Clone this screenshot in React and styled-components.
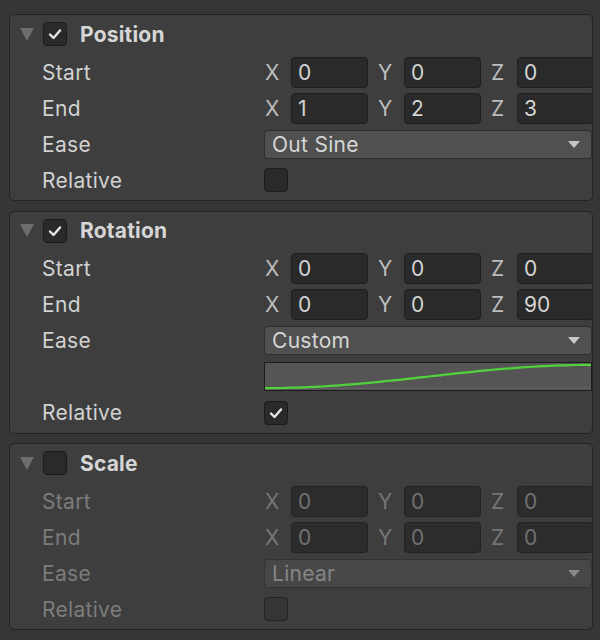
import styled, { createGlobalStyle } from 'styled-components';

const GlobalStyle = createGlobalStyle`
body {
  margin: 0;
  background: #363636;
  font-family: Inter, "Noto Sans", "Liberation Sans", sans-serif;
}
`

const sections = [
    {
        title: 'Position',
        enabled: true,
        start: ['0', '0', '0'],
        end: ['1', '2', '3'],
        ease: 'Out Sine',
        relative: false,
    },
    {
        title: 'Rotation',
        enabled: true,
        start: ['0', '0', '0'],
        end: ['0', '0', '90'],
        ease: 'Custom',
        curve: true,
        relative: true,
    },
    {
        title: 'Scale',
        enabled: false,
        start: ['0', '0', '0'],
        end: ['0', '0', '0'],
        ease: 'Linear',
        relative: false,
    },
];

function CheckMark() {
    return (
        <svg width="16" height="16" viewBox="0 0 16 16">
            <path d="M3 8.5 L6.5 12 L13 4.5" fill="none" stroke="#e6e6e6" strokeWidth="2.4" strokeLinecap="round" strokeLinejoin="round" />
        </svg>
    );
}

function Check({ checked, $dim }) {
    return <CheckBox $dim={$dim}>{checked && <CheckMark />}</CheckBox>;
}

function Vector({ values, $dim }) {
    const axes = ['X', 'Y', 'Z'];
    return (
        <VectorRow>
            {axes.map((a, i) => (
                <Axis key={a}>
                    <AxisLabel $dim={$dim}>{a}</AxisLabel>
                    <Field $dim={$dim}>{values[i]}</Field>
                </Axis>
            ))}
        </VectorRow>
    );
}

function Curve() {
    // sine ease in-out across the box
    const w = 330, pts = [];
    for (let i = 0; i <= 60; i++) {
        const t = i / 60;
        const y = 27 - 25 * (1 - Math.cos(Math.PI * t)) / 2;
        pts.push(`${(t * w).toFixed(1)},${y.toFixed(2)}`);
    }
    return (
        <CurveBox>
            <svg width="100%" height="100%" viewBox="0 0 328 29" preserveAspectRatio="none">
                <line x1="0" y1="27" x2="328" y2="27" stroke="#666" strokeWidth="1" />
                <polyline points={pts.join(' ')} fill="none" stroke="#4fd23a" strokeWidth="2.4" />
            </svg>
        </CurveBox>
    );
}

function Section({ title, enabled, start, end, ease, curve, relative }) {
    const dim = !enabled;
    return (
        <Panel>
            <Header>
                <Foldout />
                <Check checked={enabled} />
                <Title>{title}</Title>
            </Header>
            <Rows>
                <Row>
                    <Label $dim={dim}>Start</Label>
                    <Value><Vector values={start} $dim={dim} /></Value>
                </Row>
                <Row>
                    <Label $dim={dim}>End</Label>
                    <Value><Vector values={end} $dim={dim} /></Value>
                </Row>
                <Row>
                    <Label $dim={dim}>Ease</Label>
                    <Value>
                        <Dropdown $dim={dim}>
                            <span>{ease}</span>
                            <Arrow $dim={dim} />
                        </Dropdown>
                    </Value>
                </Row>
                {curve && (
                    <Row>
                        <Label />
                        <Value><Curve /></Value>
                    </Row>
                )}
                <Row>
                    <Label $dim={dim}>Relative</Label>
                    <Value><Check checked={relative} $dim={dim} /></Value>
                </Row>
            </Rows>
        </Panel>
    );
}

export default function App() {
    return (
        <Page>
            <GlobalStyle />
            {sections.map(s => <Section key={s.title} {...s} />)}
        </Page>
    );
}

const Page = styled.div`
display: flex;
flex-direction: column;
gap: 9.5px;
padding: 14px 7px 0 9px;
`

const Panel = styled.div`
background: #3e3e3e;
border: 1px solid #242424;
border-radius: 5px;
padding: 7px 0 2px 0;
overflow: hidden;
`

const Header = styled.div`
display: flex;
align-items: center;
height: 24px;
padding-left: 10px;
`

const Foldout = styled.div`
width: 0;
height: 0;
border-left: 7.5px solid transparent;
border-right: 7.5px solid transparent;
border-top: 13px solid #6e6e6e;
margin-right: 9px;
`

const CheckBox = styled.div`
width: 24px;
height: 24px;
box-sizing: border-box;
border: 1px solid #1c1c1c;
border-radius: 4px;
background: ${p => p.$dim ? '#343434' : '#2a2a2a'};
display: flex;
align-items: center;
justify-content: center;
flex-shrink: 0;
opacity: ${p => p.$dim ? 0.8 : 1};
`

const Title = styled.span`
margin-left: 13px;
font-size: 21px;
font-weight: 700;
letter-spacing: 0.2px;
color: #d6d6d6;
`

const Rows = styled.div`
margin-top: 8px;
`

const Row = styled.div`
display: flex;
align-items: center;
height: 36px;
`

const Label = styled.div`
width: 254px;
flex-shrink: 0;
box-sizing: border-box;
padding-left: 32px;
font-size: 21px;
letter-spacing: 0.3px;
color: ${p => p.$dim ? '#7c7c7c' : '#d2d2d2'};
`

const Value = styled.div`
flex: 1;
min-width: 0;
display: flex;
align-items: center;
`

const VectorRow = styled.div`
display: flex;
gap: 9px;
`

const Axis = styled.div`
display: flex;
align-items: center;
flex-shrink: 0;
`

const AxisLabel = styled.span`
width: 27px;
padding-left: 1px;
box-sizing: border-box;
font-size: 21px;
color: ${p => p.$dim ? '#767676' : '#bdbdbd'};
`

const Field = styled.div`
width: 77px;
height: 31px;
box-sizing: border-box;
background: #2a2a2a;
border: 1px solid #1e1e1e;
border-radius: 4px;
padding-left: 6px;
font-size: 21px;
line-height: 29px;
color: ${p => p.$dim ? '#7a7a7a' : '#d4d4d4'};
opacity: ${p => p.$dim ? 0.85 : 1};
`

const Dropdown = styled.div`
flex: 1;
height: 29px;
box-sizing: border-box;
background: ${p => p.$dim ? '#474747' : '#505050'};
border: 1px solid ${p => p.$dim ? '#333' : '#2e2e2e'};
border-radius: 4px;
padding: 0 11px 0 7px;
display: flex;
align-items: center;
justify-content: space-between;
font-size: 21px;
letter-spacing: 0.3px;
color: ${p => p.$dim ? '#858585' : '#d6d6d6'};
`

const Arrow = styled.div`
width: 0;
height: 0;
border-left: 6px solid transparent;
border-right: 6px solid transparent;
border-top: 7px solid ${p => p.$dim ? '#8a8a8a' : '#c8c8c8'};
`

const CurveBox = styled.div`
flex: 1;
height: 29px;
box-sizing: border-box;
background: #555555;
border: 1px solid #1c1c1c;
`
